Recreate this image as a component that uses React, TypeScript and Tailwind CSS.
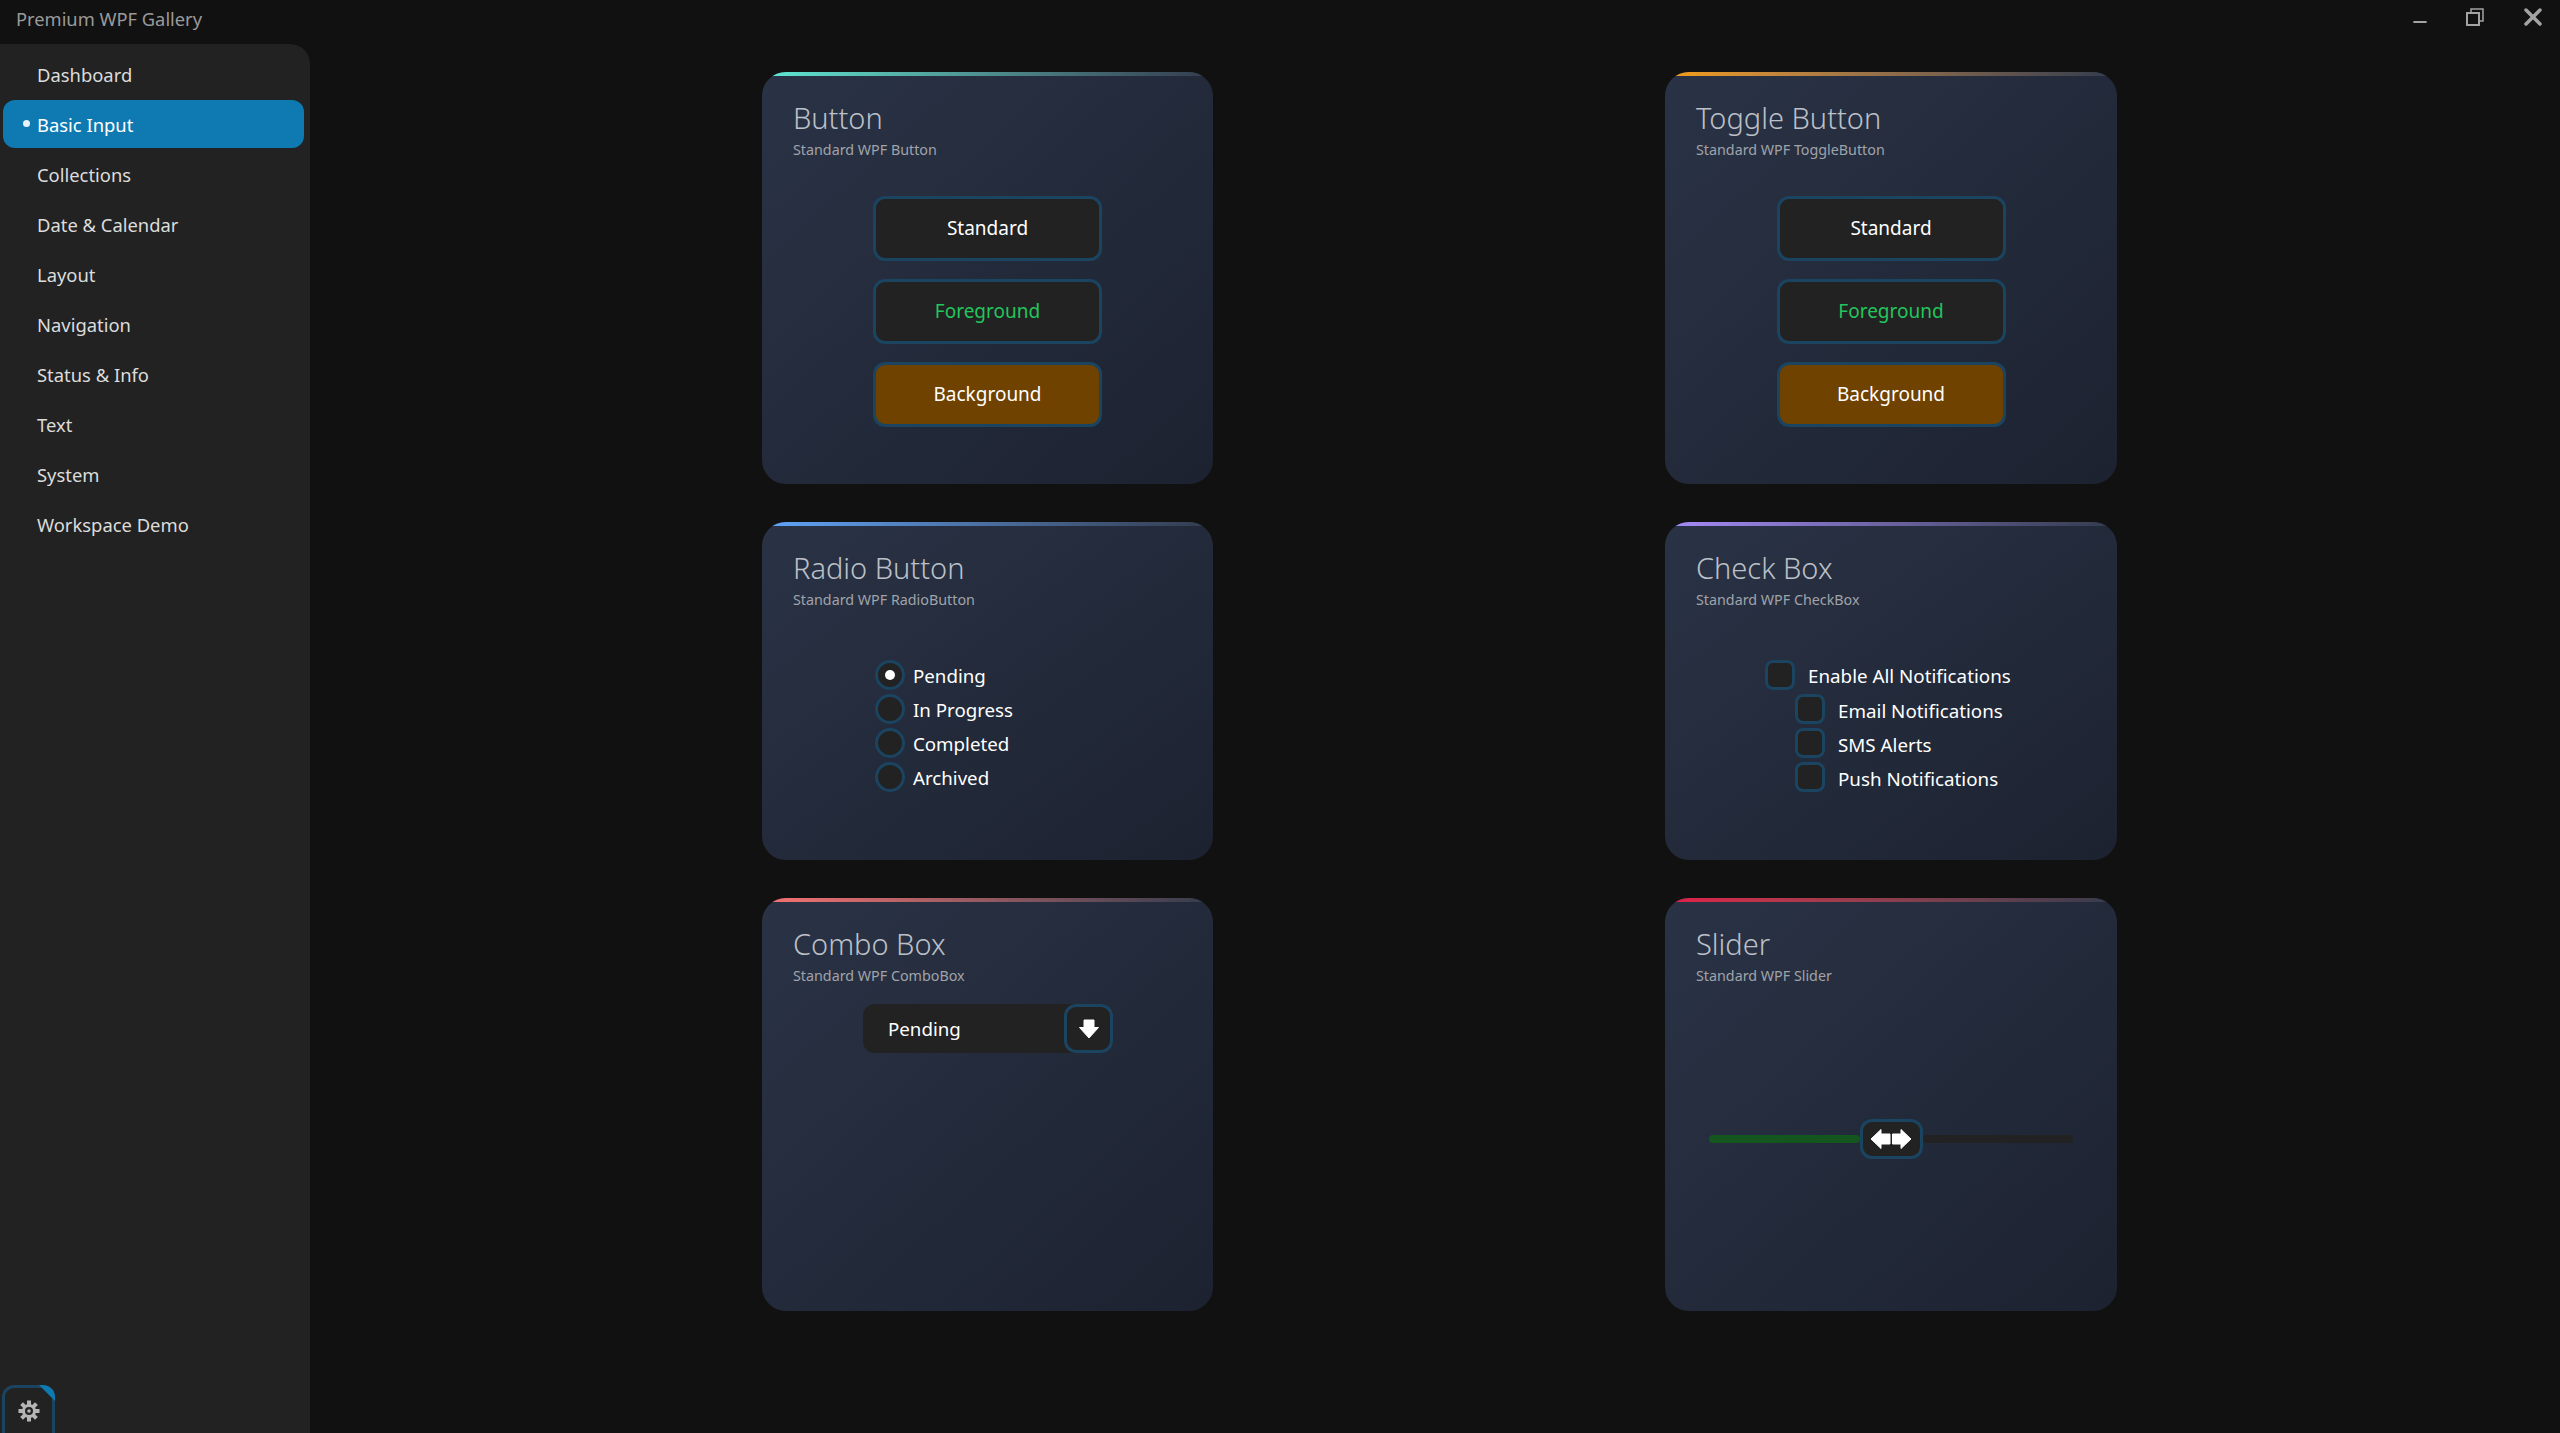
import { Minus, X } from "lucide-react";

const NAV_ITEMS = [
  "Dashboard",
  "Basic Input",
  "Collections",
  "Date & Calendar",
  "Layout",
  "Navigation",
  "Status & Info",
  "Text",
  "System",
  "Workspace Demo",
];

const font = "font-['Noto_Sans',sans-serif]";

function RestoreIcon() {
  return (
    <svg width="18" height="18" viewBox="0 0 18 18" fill="none" stroke="#a3a3a3" strokeWidth="2">
      <rect x="1" y="5" width="12" height="12" />
      <path d="M5 5V1h12v12h-4" strokeWidth="1.5" />
    </svg>
  );
}

function GearIcon() {
  const teeth = [0, 45, 90, 135, 180, 225, 270, 315];
  return (
    <svg width="22" height="22" viewBox="0 0 22 22" fill="#b5b5b5">
      {teeth.map((a) => (
        <rect key={a} x="9" y="0.5" width="4" height="5" transform={`rotate(${a} 11 11)`} />
      ))}
      <circle cx="11" cy="11" r="7" />
      <circle cx="11" cy="11" r="4" fill="#222222" />
      <circle cx="11" cy="11" r="1.8" />
    </svg>
  );
}

function DownArrow() {
  return (
    <svg width="20" height="20" viewBox="0 0 20 20" fill="#ffffff" stroke="#ffffff" strokeWidth="1" strokeLinejoin="round">
      <path d="M5 1h10v7.5h4.5L10 19 .5 8.5H5z" />
    </svg>
  );
}

function SliderArrows() {
  return (
    <svg width="42" height="20" viewBox="0 0 42 20" fill="#ffffff" stroke="#ffffff" strokeWidth="1" strokeLinejoin="round">
      <path d="M20 5v10h-9v4.5L1 10 11 .5V5z" />
      <path d="M22.5 5v10H31v4.5L41 10 31 .5V5z" />
    </svg>
  );
}

function Card({
  title,
  subtitle,
  accent,
  height,
  children,
}: {
  title: string;
  subtitle: string;
  accent: string;
  height: string;
  children: React.ReactNode;
}) {
  return (
    <div
      className={`relative flex flex-col overflow-hidden rounded-[24px] bg-gradient-to-br from-[#2a3346] to-[#1c2230] ${height}`}
    >
      <div className={`h-[4px] bg-gradient-to-r ${accent} to-[#333b4d]`} />
      <div className="px-[31px] pt-[22px]">
        <h2 className={`${font} text-[29px] leading-[40px] font-light text-[#bcc0c8]`}>{title}</h2>
        <p className={`${font} mt-[2px] text-[14.3px] leading-[20px] text-[#a0a3aa]`}>{subtitle}</p>
      </div>
      {children}
    </div>
  );
}

function DemoButton({ label, kind }: { label: string; kind: "standard" | "foreground" | "background" }) {
  const color = kind === "foreground" ? "text-[#22c55e]" : "text-white";
  const bg = kind === "background" ? "bg-[#6f4200]" : "bg-[#222222]";
  return (
    <button
      className={`${font} h-[65px] w-[229px] rounded-[12px] border-[3px] border-[#1b4460] text-[19px] ${bg} ${color}`}
    >
      {label}
    </button>
  );
}

function ButtonStack() {
  return (
    <div className="mt-[36px] flex flex-col items-center gap-[18px]">
      <DemoButton label="Standard" kind="standard" />
      <DemoButton label="Foreground" kind="foreground" />
      <DemoButton label="Background" kind="background" />
    </div>
  );
}

function Radio({ label, checked }: { label: string; checked?: boolean }) {
  return (
    <div className="flex h-[34px] items-center gap-[8px]">
      <span className="flex h-[30px] w-[30px] items-center justify-center rounded-full border-[3px] border-[#1b4460] bg-[#222222]">
        {checked && <span className="h-[10px] w-[10px] rounded-full bg-white" />}
      </span>
      <span className={`${font} pt-[1px] text-[18.7px] leading-[34px] text-white`}>{label}</span>
    </div>
  );
}

function Check({ label, nested }: { label: string; nested?: boolean }) {
  return (
    <div className={`flex h-[34px] items-center gap-[13px] ${nested ? "ml-[30px]" : ""}`}>
      <span className="h-[30px] w-[30px] rounded-[8px] border-[3px] border-[#1b4460] bg-[#222222]" />
      <span className={`${font} ${nested ? "pt-[3px]" : "pt-[2px]"} text-[18.8px] leading-[34px] text-white`}>{label}</span>
    </div>
  );
}

export default function App() {
  return (
    <div className="flex h-screen w-screen flex-col overflow-hidden bg-[#111111]">
      {/* Title bar */}
      <div className="flex h-[44px] shrink-0 items-center justify-between">
        <span className={`${font} pb-[6px] pl-[16px] text-[18.3px] text-[#9a9a9a]`}>Premium WPF Gallery</span>
        <div className="flex items-center pb-[10px]">
          <Minus className="mt-[10px] mr-[36px] h-[20px] w-[20px] text-[#a3a3a3]" strokeWidth={2.5} />
          <RestoreIcon />
          <X className="mr-[13px] ml-[35px] h-[28px] w-[28px] text-[#a3a3a3]" strokeWidth={3} />
        </div>
      </div>

      <div className="flex min-h-0 flex-1">
        {/* Sidebar */}
        <aside className="relative w-[310px] shrink-0 rounded-tr-[20px] bg-[#222222] pt-[6px]">
          <nav className="flex flex-col gap-[2px] pr-[6px] pl-[3px]">
            {NAV_ITEMS.map((item) => {
              const active = item === "Basic Input";
              return (
                <div
                  key={item}
                  className={`relative flex h-[48px] items-center rounded-[12px] pt-[1px] pl-[34px] ${font} text-[18.4px] ${
                    active ? "bg-[#0f79b2] text-white" : "text-[#dcdcdc]"
                  }`}
                >
                  {active && <span className="absolute top-[20px] left-[20px] h-[7px] w-[7px] rounded-full bg-[#e6f3fb]" />}
                  {item}
                </div>
              );
            })}
          </nav>
          <div className="absolute top-[1341px] left-[2px] flex h-[60px] w-[53px] items-start justify-center overflow-hidden rounded-[12px] bg-[#222222] pt-[15px] shadow-[inset_0_0_0_3px_#1b4460]">
            <span className="absolute top-0 right-0 h-0 w-0 border-t-[16px] border-l-[16px] border-t-[#0f79b2] border-l-transparent" />
            <GearIcon />
          </div>
        </aside>

        {/* Cards */}
        <main className="min-w-0 flex-1 pt-[28px] pl-[452px]">
          <div className="grid grid-cols-[451px_452px] gap-x-[452px] gap-y-[38px]">
            <Card title="Button" subtitle="Standard WPF Button" accent="from-[#5eead4]" height="h-[412px]">
              <ButtonStack />
            </Card>
            <Card title="Toggle Button" subtitle="Standard WPF ToggleButton" accent="from-[#f59e0b]" height="h-[412px]">
              <ButtonStack />
            </Card>
            <Card title="Radio Button" subtitle="Standard WPF RadioButton" accent="from-[#60a5fa]" height="h-[338px]">
              <div className="mt-[48px] ml-[113px] flex flex-col">
                <Radio label="Pending" checked />
                <Radio label="In Progress" />
                <Radio label="Completed" />
                <Radio label="Archived" />
              </div>
            </Card>
            <Card title="Check Box" subtitle="Standard WPF CheckBox" accent="from-[#a78bfa]" height="h-[338px]">
              <div className="mt-[48px] ml-[100px] flex flex-col">
                <Check label="Enable All Notifications" />
                <Check label="Email Notifications" nested />
                <Check label="SMS Alerts" nested />
                <Check label="Push Notifications" nested />
              </div>
            </Card>
            <Card title="Combo Box" subtitle="Standard WPF ComboBox" accent="from-[#f87171]" height="h-[413px]">
              <div className="mt-[18px] ml-[101px] flex h-[49px] w-[250px] items-center justify-between rounded-[12px] bg-[#222222]">
                <span className={`${font} pt-[1px] pl-[25px] text-[18.7px] text-white`}>Pending</span>
                <span className="flex h-[49px] w-[49px] items-center justify-center rounded-[12px] border-[3px] border-[#1b4460]">
                  <DownArrow />
                </span>
              </div>
            </Card>
            <Card title="Slider" subtitle="Standard WPF Slider" accent="from-[#e11d48]" height="h-[413px]">
              <div className="mt-[133px] flex items-center px-[44px]">
                <div className="h-[8px] flex-1 rounded-full bg-[#15561f]" />
                <div className="flex h-[40px] w-[63px] items-center justify-center rounded-[12px] border-[3px] border-[#1b4460] bg-[#222222]">
                  <SliderArrows />
                </div>
                <div className="h-[8px] flex-1 rounded-full bg-[#222222]" />
              </div>
            </Card>
          </div>
        </main>
      </div>
    </div>
  );
}
